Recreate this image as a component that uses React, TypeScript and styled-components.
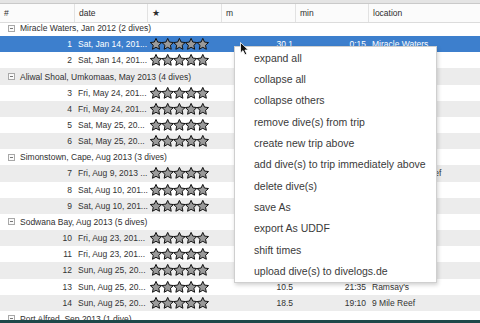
import styled, {createGlobalStyle} from "styled-components";

const GlobalStyle = createGlobalStyle`
    html, body {
        margin: 0;
        padding: 0;
        background: #ffffff;
        overflow: hidden;
    }
    body {
        font-family: "Liberation Sans", Arial, sans-serif;
    }
`

type Dive = {
    nr: number
    date: string
    depth?: string
    time?: string
    location?: string
}

type Trip = {
    title: string
    dives: Dive[]
}

// rows whose right-hand columns sit under the context menu keep those cells empty
const trips: Trip[] = [
    {
        title: "Miracle Waters, Jan 2012 (2 dives)",
        dives: [
            {nr: 1, date: "Sat, Jan 14, 201...", depth: "30.1", time: "0:15", location: "Miracle Waters"},
            {nr: 2, date: "Sat, Jan 14, 201..."},
        ],
    },
    {
        title: "Aliwal Shoal, Umkomaas, May 2013 (4 dives)",
        dives: [
            {nr: 3, date: "Fri, May 24, 201..."},
            {nr: 4, date: "Fri, May 24, 201..."},
            {nr: 5, date: "Sat, May 25, 20..."},
            {nr: 6, date: "Sat, May 25, 20..."},
        ],
    },
    {
        title: "Simonstown, Cape, Aug 2013 (3 dives)",
        dives: [
            {nr: 7, date: "Fri, Aug 9, 2013 ...", location: "Roman Rock Reef"},
            {nr: 8, date: "Sat, Aug 10, 201..."},
            {nr: 9, date: "Sat, Aug 10, 201..."},
        ],
    },
    {
        title: "Sodwana Bay, Aug 2013 (5 dives)",
        dives: [
            {nr: 10, date: "Fri, Aug 23, 201...", location: "Quarter Mile Bay"},
            {nr: 11, date: "Fri, Aug 23, 201..."},
            {nr: 12, date: "Sun, Aug 25, 20..."},
            {nr: 13, date: "Sun, Aug 25, 20...", depth: "10.5", time: "21:35", location: "Ramsay's"},
            {nr: 14, date: "Sun, Aug 25, 20...", depth: "18.5", time: "19:10", location: "9 Mile Reef"},
        ],
    },
    {
        title: "Port Alfred, Sep 2013 (1 dive)",
        dives: [],
    },
]

const menuItems = [
    "expand all",
    "collapse all",
    "collapse others",
    "remove dive(s) from trip",
    "create new trip above",
    "add dive(s) to trip immediately above",
    "delete dive(s)",
    "save As",
    "export As UDDF",
    "shift times",
    "upload dive(s) to divelogs.de",
]

const COLUMNS = "75px 73px 74px 74px 73px 1fr"

const starPoints = (cx: number, cy: number, outer: number, inner: number) => {
    const pts: string[] = []
    for (let i = 0; i < 10; i++) {
        const r = i % 2 === 0 ? outer : inner
        const a = (-90 + i * 36) * Math.PI / 180
        pts.push(`${(cx + r * Math.cos(a)).toFixed(2)},${(cy + r * Math.sin(a)).toFixed(2)}`)
    }
    return pts.join(" ")
}

const Stars: React.FC = () => (
    <svg width="60" height="12" viewBox="0 0 60 12">
        {[0, 1, 2, 3, 4].map(i => (
            <polygon
                key={i}
                points={starPoints(6 + i * 11.7, 6.4, 6, 2.9)}
                fill="#9a9a9a"
                stroke="#111"
                strokeWidth="1"
                strokeLinejoin="round"
            />
        ))}
    </svg>
)

const Cursor: React.FC = () => (
    <CursorWrap>
        <svg width="10" height="14" viewBox="0 0 10 14">
            <path d="M0.5 0.5 L0.5 11 L3 8.6 L5 12.8 L6.8 12 L4.9 8 L8.3 8 Z" fill="#111" stroke="#fff" strokeWidth="0.8"/>
        </svg>
    </CursorWrap>
)

export default function App() {
    let index = 0
    const rows: React.ReactNode[] = []
    trips.forEach(trip => {
        const i = index++
        rows.push(
            <GroupRow key={`t${i}`} $alt={i % 2 === 1}>
                <Toggle/>
                {trip.title}
            </GroupRow>
        )
        trip.dives.forEach(dive => {
            const j = index++
            const selected = dive.nr === 1
            rows.push(
                <DiveRow key={`d${dive.nr}`} $alt={j % 2 === 1} $selected={selected}>
                    <NumberCell>{dive.nr}</NumberCell>
                    <TextCell>{dive.date}</TextCell>
                    <StarCell><Stars/></StarCell>
                    <NumberCell>{dive.depth}</NumberCell>
                    <NumberCell>{dive.time}</NumberCell>
                    <TextCell>{dive.location}</TextCell>
                </DiveRow>
            )
        })
    })

    return (
        <Window>
            <GlobalStyle/>
            <TopStrip/>
            <Header>
                <HeaderCell>#</HeaderCell>
                <HeaderCell>date</HeaderCell>
                <HeaderCell>★</HeaderCell>
                <HeaderCell>m</HeaderCell>
                <HeaderCell>min</HeaderCell>
                <HeaderCell $last>location</HeaderCell>
            </Header>
            <Body>
                <RowList>{rows}</RowList>
            </Body>
            <BottomStrip/>
            <Menu>
                {menuItems.map(item => (
                    <MenuItem key={item}>{item}</MenuItem>
                ))}
            </Menu>
            <Cursor/>
        </Window>
    )
}

const Window = styled.div`
    position: relative;
    width: 480px;
    height: 323px;
    display: flex;
    flex-direction: column;
    overflow: hidden;
    background: #ffffff;
    color: #333333;
    font-size: 8.5px;
`

const TopStrip = styled.div`
    height: 3px;
    background: #e4e4e4;
    border-bottom: 1px solid #c9c9c9;
    flex: none;
`

const Header = styled.div`
    height: 19px;
    flex: none;
    display: grid;
    grid-template-columns: ${COLUMNS};
    background: #fbfbfb;
    border-bottom: 1px solid #dcdcdc;
    box-sizing: border-box;
    position: relative;
    z-index: 1;
`

const HeaderCell = styled.div<{$last?: boolean}>`
    display: flex;
    align-items: center;
    padding-left: 4px;
    color: #2d2d2d;
    border-right: ${p => p.$last ? "none" : "1px solid #e2e2e2"};
`

const Body = styled.div`
    flex: 1;
    overflow: hidden;
    position: relative;
`

const RowList = styled.div`
    margin-top: -3px;
    display: flex;
    flex-direction: column;
`

const GroupRow = styled.div<{$alt: boolean}>`
    height: 16.17px;
    display: flex;
    align-items: center;
    gap: 5px;
    padding-left: 8px;
    background: ${p => p.$alt ? "#ececec" : "#ffffff"};
    white-space: nowrap;
    color: #303030;
`

const Toggle = styled.span`
    width: 7px;
    height: 7px;
    box-sizing: border-box;
    border: 1px solid #a8a8a8;
    background: #fafafa;
    position: relative;
    &::after {
        content: "";
        position: absolute;
        left: 1px;
        right: 1px;
        top: 2px;
        height: 1px;
        background: #777;
    }
`

const DiveRow = styled.div<{$alt: boolean; $selected: boolean}>`
    height: 16.17px;
    display: grid;
    grid-template-columns: ${COLUMNS};
    align-items: center;
    background: ${p => p.$selected ? "#3d7fcd" : p.$alt ? "#ececec" : "#ffffff"};
    color: ${p => p.$selected ? "#ffffff" : "#333333"};
    white-space: nowrap;
`

const NumberCell = styled.div`
    text-align: right;
    padding-right: 3px;
    overflow: hidden;
`

const TextCell = styled.div`
    padding-left: 3px;
    overflow: hidden;
`

const StarCell = styled.div`
    padding-left: 2px;
    display: flex;
    align-items: center;
`

const BottomStrip = styled.div`
    height: 3px;
    flex: none;
    background: #1e4849;
`

const Menu = styled.div`
    position: absolute;
    left: 234px;
    top: 46px;
    width: 203px;
    box-sizing: border-box;
    background: #ffffff;
    border: 1px solid #cfcfcf;
    box-shadow: 1px 2px 4px rgba(0, 0, 0, 0.18);
    display: flex;
    flex-direction: column;
    z-index: 2;
`

const MenuItem = styled.div`
    height: 21.35px;
    display: flex;
    align-items: center;
    padding-left: 19px;
    font-size: 10.5px;
    color: #3a3a3a;
    white-space: nowrap;
`

const CursorWrap = styled.div`
    position: absolute;
    left: 240px;
    top: 42px;
    z-index: 3;
    line-height: 0;
`
